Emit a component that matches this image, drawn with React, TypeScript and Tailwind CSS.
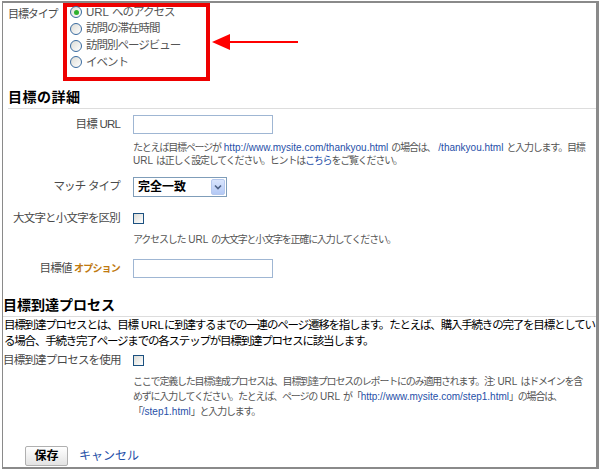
import React from "react"

const labelCol =
  "w-[117px] shrink-0 text-right text-[11.5px] tracking-[-0.8px] whitespace-nowrap text-[#4a4a4a]"
const help = "ml-[130px] text-[10px] tracking-[-1.2px] text-[#555] whitespace-nowrap"

// latin runs keep normal spacing inside the tightly tracked Japanese text
function L({ children, link }: { children: React.ReactNode; link?: boolean }) {
  return (
    <span className={link ? "tracking-normal text-[#1f4fa8] mx-[3px]" : "tracking-normal mx-[3px]"}>
      {children}
    </span>
  )
}

function Radio({ checked, children }: { checked?: boolean; children: React.ReactNode }) {
  return (
    <div className="flex items-center h-[16.7px] gap-[4px] pl-[3px]">
      <span className="flex items-center justify-center w-[12px] h-[12px] rounded-full border border-[#3a6b9f] bg-gradient-to-br from-[#dcdcd6] to-white">
        {checked && <span className="w-[5px] h-[5px] rounded-full bg-[#2fb12f]" />}
      </span>
      <span className="text-[11.5px] tracking-[-1px] whitespace-nowrap text-[#555] leading-none">{children}</span>
    </div>
  )
}

function Checkbox() {
  return (
    <span className="block w-[11px] h-[11px] border border-[#1c5180] bg-gradient-to-br from-[#dcdcd7] to-white" />
  )
}

function Arrow() {
  return (
    <svg width="86" height="18" viewBox="0 0 86 18" className="ml-[2px]">
      <polygon points="0,9 18,1 18,17" fill="#ff0000" />
      <line x1="17" y1="9" x2="86" y2="9" stroke="#ff0000" strokeWidth="2" />
    </svg>
  )
}

export default function App() {
  return (
    <div className="w-[600px] h-[471px] bg-white pt-[1px] pl-[2px] font-['Liberation_Sans','Noto_Sans_CJK_JP',sans-serif]">
      <div className="w-[597px] h-[468px] border-t-2 border-l border-r-[3px] border-b-2 border-[#8a8a8a] overflow-hidden">
        {/* 目標タイプ */}
        <div className="flex items-center">
          <div className="w-[60px] self-start pl-[5px] pt-[3px] text-[11px] tracking-[-1.1px] whitespace-nowrap text-[#4a4a4a]">
            目標タイプ
          </div>
          <div className="w-[147px] h-[78px] border-[4px] border-[#ee0000]">
            <div className="-mt-[3px]">
              <Radio checked>
                <span className="tracking-normal mr-[3px]">URL</span>へのアクセス
              </Radio>
              <Radio>訪問の滞在時間</Radio>
              <Radio>訪問別ページビュー</Radio>
              <Radio>イベント</Radio>
            </div>
          </div>
          <Arrow />
        </div>

        {/* 目標の詳細 */}
        <div className="ml-[5px] mt-[8px] pb-[3px] border-b border-[#dddddd]">
          <h2 className="text-[14px] leading-[16px] tracking-[0.5px] font-bold text-black">目標の詳細</h2>
        </div>

        <div className="flex items-center gap-[13px] mt-[6px]">
          <div className={labelCol}>目標 URL</div>
          <div className="w-[140px] h-[19px] border border-[#9fb6d3] bg-white" />
        </div>
        <p className={`${help} mt-[7px] leading-[13px]`}>
          たとえば目標ページが<L link>http://www.mysite.com/thankyou.html</L>の場合は、
          <L link>/thankyou.html</L>と入力します。目標
          <br />
          <span className="tracking-normal mr-[3px]">URL</span>は正しく設定してください。ヒントは
          <span className="text-[#1f4fa8]">こちら</span>をご覧ください。
        </p>

        <div className="flex items-center gap-[13px] mt-[10px]">
          <div className={labelCol}>マッチ タイプ</div>
          <div className="flex items-center w-[94px] h-[20px] border border-[#7f9db9] bg-white">
            <span className="flex-1 pl-[4px] text-[12px] font-bold text-black leading-none">完全一致</span>
            <span className="flex items-center justify-center w-[14px] h-[16px] mr-[1px] rounded-[2px] border border-[#b5c8ee] bg-gradient-to-b from-[#d9e5fd] to-[#b4c9f5]">
              <svg width="8" height="6" viewBox="0 0 8 6">
                <path d="M1 1.5 L4 4.5 L7 1.5" fill="none" stroke="#4d6185" strokeWidth="1.6" />
              </svg>
            </span>
          </div>
        </div>

        <div className="flex items-center gap-[13px] mt-[13px]">
          <div className={labelCol}>大文字と小文字を区別</div>
          <Checkbox />
        </div>
        <p className={`${help} mt-[6px] leading-[13px]`}>
          アクセスした<L>URL</L>の大文字と小文字を正確に入力してください。
        </p>

        <div className="flex items-center gap-[13px] mt-[13px]">
          <div className={labelCol}>
            目標値 <span className="text-[10px] font-bold text-[#c07a10]">オプション</span>
          </div>
          <div className="w-[140px] h-[19px] border border-[#9fb6d3] bg-white" />
        </div>

        {/* 目標到達プロセス */}
        <div className="mt-[19px] pb-[3px] border-b border-[#dddddd]">
          <h2 className="text-[14px] leading-[16px] font-bold text-black">目標到達プロセス</h2>
        </div>
        <p className="pl-[1px] text-[11.5px] leading-[16px] text-black whitespace-nowrap tracking-[-1.2px]">
          目標到達プロセスとは、目標<span className="tracking-normal ml-[3px]">URL</span>に到達するまでの一連のページ遷移を指します。たとえば、購入手続きの完了を目標としてい
          <br />
          る場合、手続き完了ページまでの各ステップが目標到達プロセスに該当します。
        </p>

        <div className="flex items-center gap-[13px] mt-[3px]">
          <div className={labelCol}>目標到達プロセスを使用</div>
          <Checkbox />
        </div>
        <p className={`${help} mt-[4px] leading-[15px]`}>
          ここで定義した目標達成プロセスは、目標到達プロセスのレポートにのみ適用されます。注:<L>URL</L>はドメインを含
          <br />
          めずに入力してください。たとえば、ページの<L>URL</L>が「
          <span className="tracking-normal text-[#1f4fa8]">http://www.mysite.com/step1.html</span>」の場合は、
          <br />
          「<span className="tracking-normal text-[#1f4fa8]">/step1.html</span>」と入力します。
        </p>

        <div className="flex items-center gap-[11px] ml-[22px] mt-[27px]">
          <button className="w-[43px] h-[20px] rounded-[2px] border border-[#b0b0b0] bg-gradient-to-b from-white to-[#e3e3e3] text-[12px] font-bold text-black leading-none">
            保存
          </button>
          <span className="text-[12px] text-[#1f4fa8]">キャンセル</span>
        </div>
      </div>
    </div>
  )
}
